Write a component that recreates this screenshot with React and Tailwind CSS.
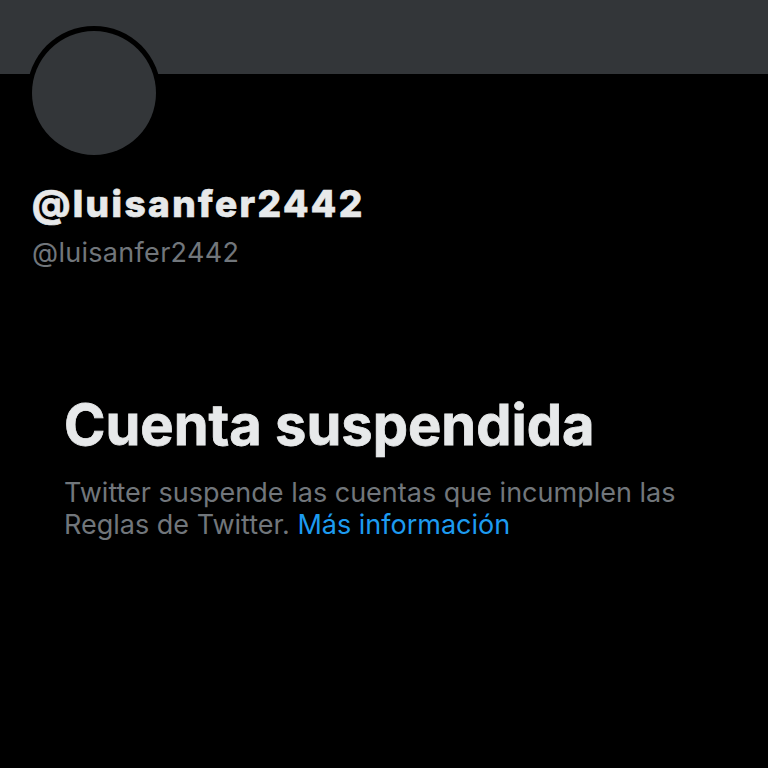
export default function App() {
  return (
    <div className="w-[768px] h-[768px] bg-black overflow-hidden" style={{ fontFamily: 'Inter, "Liberation Sans", Arial, sans-serif' }}>
      <div className="h-[74px] bg-[#333639]" />
      <div className="pl-[27px] -mt-[48px]">
        <div className="w-[134px] h-[134px] rounded-full bg-black p-[5px]">
          <div className="w-full h-full rounded-full bg-[#333639]" />
        </div>
      </div>
      <div className="pl-[32px] mt-[22px]">
        <div className="text-[37px] leading-[44px] font-extrabold tracking-[2.4px] text-[#e7e9ea] [-webkit-text-stroke:0.7px_#e7e9ea]">@luisanfer2442</div>
        <div className="text-[27px] leading-[32px] text-[#71767b] tracking-[0.3px] mt-[11px]">@luisanfer2442</div>
      </div>
      <div className="pl-[64px] mt-[124px]">
        <div className="text-[56px] leading-[64px] font-bold text-[#e7e9ea] [-webkit-text-stroke:0.8px_#e7e9ea]">Cuenta suspendida</div>
        <div className="text-[27px] leading-[32px] text-[#71767b] mt-[20px] w-[650px]">
          Twitter suspende las cuentas que incumplen las Reglas de Twitter.{' '}
          <span className="text-[#1d9bf0]">Más información</span>
        </div>
      </div>
    </div>
  );
}
